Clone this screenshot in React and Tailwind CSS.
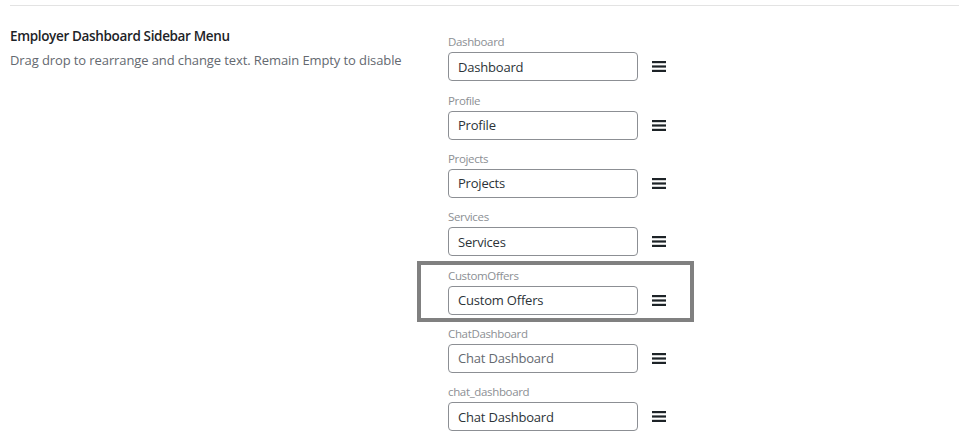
import React from "react";

const items = [
  { label: "Dashboard", value: "Dashboard" },
  { label: "Profile", value: "Profile" },
  { label: "Projects", value: "Projects" },
  { label: "Services", value: "Services" },
  { label: "CustomOffers", value: "Custom Offers", active: true },
  { label: "ChatDashboard", value: "", placeholder: "Chat Dashboard" },
  { label: "chat_dashboard", value: "Chat Dashboard" },
];

function MenuIcon() {
  return (
    <svg width="14" height="11" viewBox="0 0 14 11" className="shrink-0">
      <rect x="0" y="0" width="14" height="2.2" fill="#1d2327" />
      <rect x="0" y="4.4" width="14" height="2.2" fill="#1d2327" />
      <rect x="0" y="8.8" width="14" height="2.2" fill="#1d2327" />
    </svg>
  );
}

export default function App() {
  return (
    <div
      className="w-[959px] h-[443px] bg-white overflow-hidden pl-[10px]"
      style={{ fontFamily: '"Open Sans", "Noto Sans", sans-serif' }}
    >
      <div className="h-[5px]" />
      <div className="h-px bg-[#e3e3e3]" />
      <div className="flex mt-[20px]">
        <div className="w-[411px] shrink-0">
          <div className="text-[13.5px] leading-[20px] font-semibold text-[#1d2327] tracking-[-0.35px]">
            Employer Dashboard Sidebar Menu
          </div>
          <div className="mt-[4px] text-[13px] leading-[20px] text-[#646970] tracking-[-0.1px]">
            Drag drop to rearrange and change text. Remain Empty to disable
          </div>
        </div>
        <div className="flex flex-col">
          {items.map((it) => (
            <div key={it.label} className="h-[58.33px] pt-[5.33px]">
              <div
                className={
                  "w-[269px] h-[53px] pl-[27px] pt-[3px] " +
                  (it.active ? "outline-4 outline-[#808080]" : "")
                }
              >
                <div className="text-[11.5px] leading-[16px] text-[#8c8f94] tracking-[-0.35px]">
                  {it.label}
                </div>
                <div className="flex items-center mt-[2px]">
                  <input
                    readOnly
                    value={it.value}
                    placeholder={it.placeholder}
                    className="w-[190px] h-[29px] rounded-[4px] border border-[#8c8f94] px-[9px] text-[13px] text-[#2c3338] placeholder:text-[#646970] outline-none tracking-[-0.2px]"
                    style={{ fontFamily: '"Open Sans", "Noto Sans", sans-serif' }}
                  />
                  <div className="ml-[14px] flex items-center">
                    <MenuIcon />
                  </div>
                </div>
              </div>
            </div>
          ))}
        </div>
      </div>
    </div>
  );
}
